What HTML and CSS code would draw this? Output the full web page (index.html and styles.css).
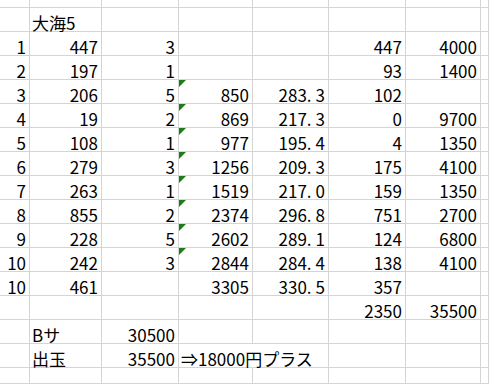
FILE: index.html
```html
<!DOCTYPE html>
<html lang="ja">
<head>
<meta charset="utf-8">
<title>大海5</title>
<link rel="stylesheet" href="styles.css">
</head>
<body>
<div class="sheet">
  <div class="row top"><div class="c"></div><div class="c"></div><div class="c"></div><div class="c"></div><div class="c"></div><div class="c"></div><div class="c"></div><div class="c"></div></div>
  <div class="row"><div class="c"></div><div class="c t">大海5</div><div class="c"></div><div class="c"></div><div class="c"></div><div class="c"></div><div class="c"></div><div class="c"></div></div>
  <div class="row"><div class="c">1</div><div class="c">447</div><div class="c">3</div><div class="c"></div><div class="c"></div><div class="c">447</div><div class="c">4000</div><div class="c"></div></div>
  <div class="row"><div class="c">2</div><div class="c">197</div><div class="c">1</div><div class="c"></div><div class="c"></div><div class="c">93</div><div class="c">1400</div><div class="c"></div></div>
  <div class="row"><div class="c">3</div><div class="c">206</div><div class="c">5</div><div class="c err">850</div><div class="c">283<span class="pt">.</span>3</div><div class="c">102</div><div class="c"></div><div class="c"></div></div>
  <div class="row"><div class="c">4</div><div class="c">19</div><div class="c">2</div><div class="c err">869</div><div class="c">217<span class="pt">.</span>3</div><div class="c">0</div><div class="c">9700</div><div class="c"></div></div>
  <div class="row"><div class="c">5</div><div class="c">108</div><div class="c">1</div><div class="c err">977</div><div class="c">195<span class="pt">.</span>4</div><div class="c">4</div><div class="c">1350</div><div class="c"></div></div>
  <div class="row"><div class="c">6</div><div class="c">279</div><div class="c">3</div><div class="c err">1256</div><div class="c">209<span class="pt">.</span>3</div><div class="c">175</div><div class="c">4100</div><div class="c"></div></div>
  <div class="row"><div class="c">7</div><div class="c">263</div><div class="c">1</div><div class="c err">1519</div><div class="c">217<span class="pt">.</span>0</div><div class="c">159</div><div class="c">1350</div><div class="c"></div></div>
  <div class="row"><div class="c">8</div><div class="c">855</div><div class="c">2</div><div class="c err">2374</div><div class="c">296<span class="pt">.</span>8</div><div class="c">751</div><div class="c">2700</div><div class="c"></div></div>
  <div class="row"><div class="c">9</div><div class="c">228</div><div class="c">5</div><div class="c err">2602</div><div class="c">289<span class="pt">.</span>1</div><div class="c">124</div><div class="c">6800</div><div class="c"></div></div>
  <div class="row"><div class="c">10</div><div class="c">242</div><div class="c">3</div><div class="c err">2844</div><div class="c">284<span class="pt">.</span>4</div><div class="c">138</div><div class="c">4100</div><div class="c"></div></div>
  <div class="row"><div class="c">10</div><div class="c">461</div><div class="c"></div><div class="c">3305</div><div class="c">330<span class="pt">.</span>5</div><div class="c">357</div><div class="c"></div><div class="c"></div></div>
  <div class="row"><div class="c"></div><div class="c"></div><div class="c"></div><div class="c"></div><div class="c"></div><div class="c">2350</div><div class="c">35500</div><div class="c"></div></div>
  <div class="row"><div class="c"></div><div class="c t">Bサ</div><div class="c">30500</div><div class="c"></div><div class="c"></div><div class="c"></div><div class="c"></div><div class="c"></div></div>
  <div class="row"><div class="c"></div><div class="c t">出玉</div><div class="c">35500</div><div class="c t ov">⇒18000円プラス</div><div class="c"></div><div class="c"></div><div class="c"></div><div class="c"></div></div>
  <div class="row bottom"><div class="c"></div><div class="c"></div><div class="c"></div><div class="c"></div><div class="c"></div><div class="c"></div><div class="c"></div><div class="c"></div></div>
</div>
</body>
</html>
```
FILE: styles.css
```css
html, body {
  margin: 0;
  padding: 0;
  background: #ffffff;
}
body {
  width: 489px;
  height: 384px;
  overflow: hidden;
  font-family: "Noto Sans CJK JP", "Noto Sans", sans-serif;
  font-size: 17px;
  color: #000000;
}
.sheet {
  display: flex;
  flex-direction: column;
}
.row {
  display: grid;
  grid-template-columns: 30px 72px 77px 74px 76px 77px 75px 1fr;
  height: 24px;
}
.row.top {
  height: 8px;
}
.row.bottom {
  height: 16px;
}
.c {
  box-sizing: border-box;
  border-right: 1px solid #d4d4d4;
  border-bottom: 1px solid #d4d4d4;
  display: flex;
  align-items: flex-end;
  justify-content: flex-end;
  padding-right: 3px;
  line-height: 16px;
  white-space: nowrap;
  position: relative;
}
.c.t {
  justify-content: flex-start;
  padding-right: 0;
  padding-left: 2px;
}
.c.ov {
  overflow: visible;
  border-right-color: transparent;
  z-index: 1;
}
.pt {
  letter-spacing: 4px;
}
.c.err::before {
  content: "";
  position: absolute;
  left: 0;
  top: 0;
  width: 0;
  height: 0;
  border-top: 7px solid #1a7d1a;
  border-right: 7px solid transparent;
}
```
